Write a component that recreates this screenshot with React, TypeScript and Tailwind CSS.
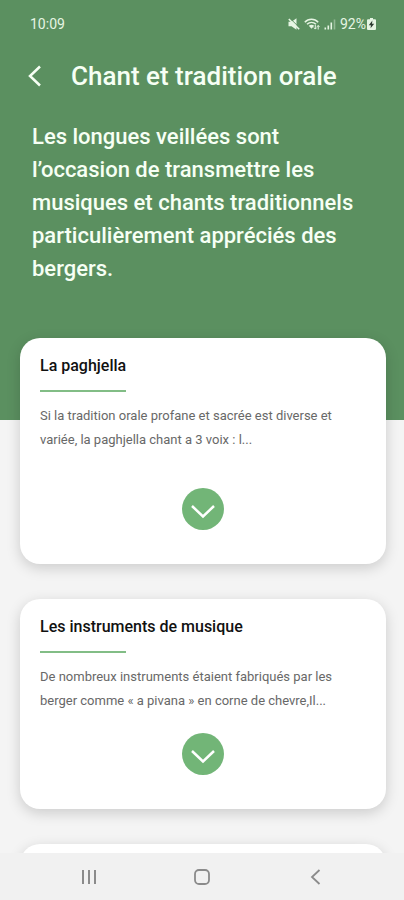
interface Topic {
  id: number
  title: string
  excerpt: string
  spacing: string
}

const topics: Topic[] = [
  {
    id: 1,
    title: 'La paghjella',
    excerpt: 'Si la tradition orale profane et sacrée est diverse et variée, la paghjella chant a 3 voix : l...',
    spacing: 'pt-9 pb-[34px]',
  },
  {
    id: 2,
    title: 'Les instruments de musique',
    excerpt: 'De nombreux instruments étaient fabriqués par les berger comme « a pivana » en corne de chevre,Il...',
    spacing: 'pt-5 pb-[34px]',
  },
]

function StatusBar() {
  return (
    <div className="flex h-12 items-center justify-between pl-[30px] pr-7 text-sm text-[#e6f5e3]">
      <span>10:09</span>
      <div className="flex items-center gap-1">
        <svg className="h-3 w-3" viewBox="0 0 12 12" fill="currentColor">
          <path d="M.5 3.800h3L8.500.3v11.400L3.500 8.200h-3z" />
          <path d="M1.800.2 12 10.200" stroke="#5b9060" strokeWidth="1" />
          <path d="M.8 1 11.200 11.200" stroke="currentColor" strokeWidth="1.600" />
        </svg>
        <svg className="h-3 w-4" viewBox="0 0 16 12" fill="none" stroke="currentColor">
          <path d="M.8 4.200C4.500.3 10.500.3 14.200 4.200M3 6.300c2.600-2.500 6.400-2.500 9 0" strokeWidth="1.500" />
          <path d="M4.800 7.800c1.600-1.500 3.800-1.500 5.400 0L7.500 10.800z" fill="currentColor" stroke="none" />
          <path d="M11.300 7v4M9.900 9.600l1.400 1.500 1.300-1.500M14.200 11.500v-4M12.900 8.900l1.300-1.400 1.300 1.400" strokeWidth="1" />
        </svg>
        <svg className="h-3 w-3" viewBox="0 0 12 12" fill="currentColor">
          <path d="M.5 9.500h1.600v2H.5zM3.500 7.500h1.600v4H3.500zM6.500 4.500h1.600v7H6.500z" />
          <path d="M9.700 1.500h1.600v10H9.700z" opacity=".4" />
        </svg>
        <div className="flex items-center">
          <span>92%</span>
          <svg className="ml-px h-3 w-[9px]" viewBox="0 0 9 12">
            <path d="M3 0h3v1.200h2q1 0 1 1V11q0 1-1 1H1q-1 0-1-1V2.200q0-1 1-1h2z" fill="currentColor" />
            <path d="M5.400 2.600 1.800 7.200h2.100L3.600 10.200 7.200 5.700H5z" fill="#2c3a30" />
          </svg>
        </div>
      </div>
    </div>
  )
}

function TopicCard({ topic }: { topic: Topic }) {
  return (
    <article className="rounded-[20px] bg-white px-5 pt-4 shadow-[0_4px_14px_rgba(0,0,0,0.17)]">
      <h2 className="text-base leading-6 font-medium text-[#111111]">{topic.title}</h2>
      <div className="mt-3 h-0.5 w-[86px] bg-[#82bd86]" />
      <p className="mt-3 text-[13px] leading-6 text-[#686868]">{topic.excerpt}</p>
      <div className={`flex justify-center ${topic.spacing}`}>
        <button
          aria-label={`Lire la suite : ${topic.title}`}
          className="flex h-[42px] w-[42px] items-center justify-center rounded-full bg-[#72b577] text-white"
        >
          <svg className="h-6 w-6" viewBox="0 0 24 24" fill="none" stroke="currentColor" strokeWidth="2.500">
            <path d="M1 9 12 19.500 23 9" />
          </svg>
        </button>
      </div>
    </article>
  )
}

function NavigationBar() {
  return (
    <nav className="grid h-[47px] shrink-0 grid-cols-3 items-center bg-[#f1f1f1] px-8 text-[#8b8b8b]">
      <button aria-label="Applications récentes" className="flex justify-center">
        <svg className="h-4 w-4" viewBox="0 0 16 16" fill="none" stroke="currentColor" strokeWidth="2">
          <path d="M2 1v14M8 1v14M14 1v14" />
        </svg>
      </button>
      <button aria-label="Accueil" className="flex justify-center">
        <svg className="h-4 w-4" viewBox="0 0 16 16" fill="none" stroke="currentColor" strokeWidth="1.800">
          <rect x="1" y="1" width="14" height="14" rx="4" />
        </svg>
      </button>
      <button aria-label="Retour" className="flex justify-center">
        <svg className="h-4 w-4" viewBox="0 0 16 16" fill="none" stroke="currentColor" strokeWidth="1.800">
          <path d="M12.500 1 5 8l7.500 7" />
        </svg>
      </button>
    </nav>
  )
}

export default function App() {
  return (
    <div className="flex h-screen flex-col overflow-hidden bg-[#f4f4f4] font-[Roboto,sans-serif]">
      <main className="min-h-0 flex-1 overflow-hidden">
        <header className="bg-[#5b9060] pb-[135px] text-[#f6fff4]">
          <StatusBar />
          <div className="flex h-14 items-center pl-7">
            <button aria-label="Retour" className="flex w-[43px]">
              <svg className="h-6 w-4" viewBox="0 0 16 24" fill="none" stroke="currentColor" strokeWidth="2.500">
                <path d="M12 2.500 2 12l10 9.500" />
              </svg>
            </button>
            <h1 className="text-[26px] font-medium">Chant et tradition orale</h1>
          </div>
          <p className="mt-4 px-8 text-[22px] leading-[33px] font-medium">
            Les longues veillées sont l’occasion de transmettre les musiques et chants traditionnels particulièrement
            appréciés des bergers.
          </p>
        </header>

        <section className="-mt-[82px] flex flex-col gap-[35px] pr-[18px] pl-5">
          {topics.map((topic) => (
            <TopicCard key={topic.id} topic={topic} />
          ))}
          <article className="h-52 rounded-[20px] bg-white shadow-[0_4px_14px_rgba(0,0,0,0.17)]" />
        </section>
      </main>
      <NavigationBar />
    </div>
  )
}
